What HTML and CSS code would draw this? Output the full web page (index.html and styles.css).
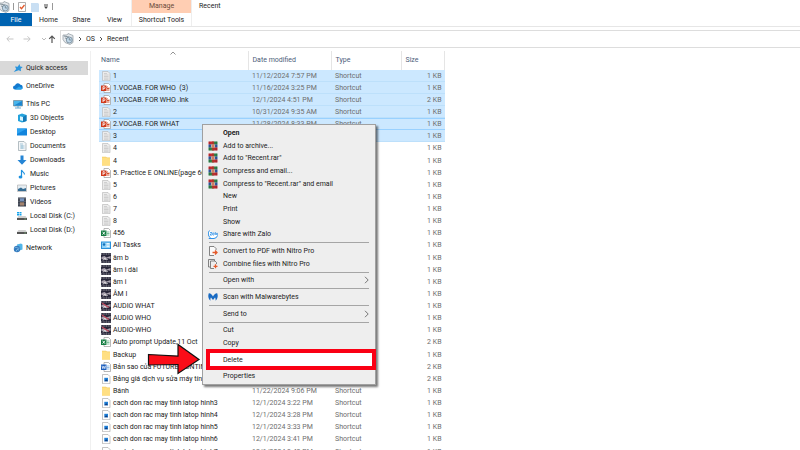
FILE: index.html
```html
<!DOCTYPE html>
<html lang="en">
<head>
<meta charset="utf-8">
<title>Recent</title>
<link rel="stylesheet" href="styles.css">
</head>
<body>
<svg class="defs" aria-hidden="true">
  <symbol id="doc" viewBox="0 0 10 10"><path d="M1.500.500h5.500l2 2v7.200h-7.500z" fill="#ececec" stroke="#b4b4b4" stroke-width=".6"/><path d="M3 2.500h3M3 4h4.500M3 5.500h4.500M3 7h4.500M3 8.300h4.500" stroke="#bcbcbc" stroke-width=".6"/></symbol>
  <symbol id="ppt" viewBox="0 0 10 10"><path d="M3 .5h4.500l2 2v7h-6.500z" fill="#fff" stroke="#999" stroke-width=".7"/><path d="M6 5.500h2.500M6 7h2.500M6.500 3.500a1 1 0 1 0 1.500 1" stroke="#d35230" fill="none"/><path d="M0 2.500h5.500v5.500H0z" fill="#d13b1d"/><path d="M2 7V3.700h1a.9.9 0 0 1 0 2H2" stroke="#fff" fill="none" stroke-width=".8"/></symbol>
  <symbol id="xls" viewBox="0 0 10 10"><path d="M3 .5h4.500l2 2v7h-6.500z" fill="#fff" stroke="#999" stroke-width=".7"/><path d="M6 4h2.500M6 5.500h2.500M6 7h2.500" stroke="#2c9a5d" stroke-width=".6"/><path d="M0 2.500h5.500v5.500H0z" fill="#137c41"/><path d="M1.500 3.700l2.500 3M4 3.700l-2.500 3" stroke="#fff" stroke-width=".9"/></symbol>
  <symbol id="word" viewBox="0 0 10 10"><path d="M3 .5h4.500l2 2v7h-6.500z" fill="#fff" stroke="#999" stroke-width=".7"/><path d="M6 4h2.500M6 5.500h2.500M6 7h2.500" stroke="#4a90d9" stroke-width=".6"/><path d="M0 2.500h5.500v5.500H0z" fill="#1b5ebe"/><path d="M1 3.700l.8 3 1-2.500 1 2.500.8-3" stroke="#fff" fill="none" stroke-width=".7"/></symbol>
  <symbol id="folder" viewBox="0 0 10 10"><path d="M1 .8h4l1 .8h3V9.500H1z" fill="#f3cc62"/><path d="M1 1.500h4.500l1 .8H9V9.500H1z" fill="#ffdf82"/></symbol>
  <symbol id="tasks" viewBox="0 0 10 10"><path d="M0 1.500h10v7.500H0z" fill="#2a91dc"/><path d="M1 2.500h8v5.500H1z" fill="#8fd0f7"/><path d="M5.500 3.500h3M5.500 5h3M5.500 6.500h3" stroke="#fff" stroke-width=".8"/><circle cx="3" cy="4.500" r="1.300" fill="#1572bc"/></symbol>
  <symbol id="media" viewBox="0 0 10 10"><path d="M0 0h10v10H0z" fill="#28273a"/><path d="M0 1h10M0 9h10" stroke="#ddd" stroke-width=".7" stroke-dasharray="1 .7"/><path d="M.5 4l3-1 2 1.500 4-1.500v3l-3-1-2 2-4-1z" fill="#a9a2ae"/><path d="M2 7.500l2-2.500 1 2 2-1" stroke="#eee" stroke-width=".7" fill="none"/></symbol>
  <symbol id="audio" viewBox="0 0 10 10"><use href="#media"/><path d="M1 2l3 2 4 2.500" stroke="#c0475b" stroke-width="1.200"/></symbol>
  <symbol id="image" viewBox="0 0 10 10"><path d="M1.500.500h5.500l2 2v7.200h-7.500z" fill="#fff" stroke="#aaa" stroke-width=".7"/><path d="M3.300 3.800h3.700v3.500H3.300z" fill="#1e7ed6"/><path d="M3.300 7.300l2-2 1.700 2z" fill="#123b7b"/></symbol>
  <symbol id="rar" viewBox="0 0 10 10"><path d="M.500.500h5v3h-5z" fill="#d8262f"/><path d="M5.500.5h4v3h-4z" fill="#2a8a4a"/><path d="M.5 3.500h9v3h-9z" fill="#2f5cb0"/><path d="M.5 6.500h5v3h-5z" fill="#2a8a4a"/><path d="M5.500 6.500h4v3h-4z" fill="#c9262f"/><path d="M3.800.5h2.400v9H3.800z" fill="#a8392c"/><path d="M3.200 3.500h3.600v3H3.200z" fill="#e8c9a0"/><path d="M4.300 4.300h1.400v1.400H4.300z" fill="#c0302a"/><path d="M1.800.5v9M8.200.5v9" stroke="#333" stroke-width=".4"/></symbol>
  <symbol id="globe" viewBox="0 0 12 12"><path d="M1 2h4l1-1.500 5 2v7l-3 2-5-2-2-3z" fill="#e4e8ec" stroke="#8d969e" stroke-width=".7"/><circle cx="7.300" cy="7" r="3" fill="#bfd6e7" stroke="#718797" stroke-width=".8"/><path d="M2 3l5 1M3 5l2 .5M7.300 5v2h2" stroke="#6d7d88" stroke-width=".8" fill="none"/></symbol>
  <symbol id="drive" viewBox="0 0 10 10"><path d="M1.500 5h7L10 7H0z" fill="#d0d0d0"/><path d="M0 7h10v2H0z" fill="#555"/><path d="M7.500 8h1.300" stroke="#8fe08f" stroke-width=".7"/></symbol>
</svg>

<header class="ribbon">
  <div class="quick">
    <svg class="ic12"><use href="#globe"/></svg>
    <span class="bar"></span>
    <svg viewBox="0 0 10 10"><path d="M1.500.500h7v9h-7z" fill="#fff" stroke="#999" stroke-width=".8"/><path d="M3 5l1.500 1.700L7.500 3" fill="none" stroke="#e2592b" stroke-width="1.300"/></svg>
    <svg viewBox="0 0 10 10"><path d="M1 1h7l1 1v8H1z" fill="#c9dff3"/></svg>
    <svg class="ic6" viewBox="0 0 6 6"><path d="M1 1h4" stroke="#444"/><path d="M1 2.500h4L3 5z" fill="#444"/></svg>
    <span class="bar"></span>
  </div>
  <nav class="tabs">
    <a class="file" href="#file">File</a>
    <a href="#home">Home</a>
    <a href="#share">Share</a>
    <a href="#view">View</a>
  </nav>
  <div class="tools">
    <span class="manage">Manage</span>
    <a href="#tools">Shortcut Tools</a>
  </div>
  <h1>Recent</h1>
</header>

<div class="address">
  <button class="nav" aria-label="Back"><svg viewBox="0 0 8 8"><path d="M7.500 4H1M3.500 1.300L.8 4l2.700 2.700" stroke="#c5c5c5"/></svg></button>
  <button class="nav" aria-label="Forward"><svg viewBox="0 0 8 8"><path d="M.5 4H7M4.500 1.300L7.200 4 4.500 6.700" stroke="#c5c5c5"/></svg></button>
  <button class="nav small" aria-label="History"><svg viewBox="0 0 8 8"><path d="M2 3l2 2 2-2" stroke="#bbb"/></svg></button>
  <button class="nav up" aria-label="Up"><svg viewBox="0 0 8 8"><path d="M4 8V1M1.200 3.800L4 1l2.800 2.800" stroke="#555" stroke-width="1.200"/></svg></button>
  <div class="path">
    <svg class="ic12"><use href="#globe"/></svg>
    <svg class="sep" viewBox="0 0 4 6"><path d="M1 1l2 2-2 2"/></svg>
    <a href="#os">OS</a>
    <svg class="sep" viewBox="0 0 4 6"><path d="M1 1l2 2-2 2"/></svg>
    <a href="#recent">Recent</a>
  </div>
</div>

<div class="body">
  <nav class="side">
    <a class="top active" href="#q"><svg viewBox="0 0 10 10"><path d="M6.500 1l.7 2.500 2.500.5-2 1.700.3 2.600-2.300-1L.7 9l2.500-3L2 3.500l2.700.3z" fill="#2b95dd"/></svg>Quick access</a>
    <a class="top" href="#o"><svg viewBox="0 0 10 10"><path d="M2 8.500a2 2 0 0 1 0-4 3 3 0 0 1 5.500-.7A2.400 2.400 0 0 1 8 8.500z" fill="#1279cf"/><path d="M2 8.500l4-3 3.600 1.600A2 2 0 0 1 8 8.500z" fill="#27a3ea"/></svg>OneDrive</a>
    <a class="top" href="#pc"><svg viewBox="0 0 10 10"><path d="M.500 1.500h9v5.500h-9z" fill="#48b5ec" stroke="#657885" stroke-width=".6"/><path d="M1 6.500l8-4.500v4.500z" fill="#1d86d0"/><path d="M2 9h6M5 7v2" stroke="#69a8cf"/></svg>This PC</a>
    <a href="#3d"><svg viewBox="0 0 10 10"><path d="M1 2l4-1.500L9.500 2v6L5 9.500 1 8z" fill="#24a3dd"/><path d="M3 3.200l3 .8v4l-3-.8z" fill="#d9f5ff"/><path d="M6 4l3.500-2v6L6 9.200z" fill="#1479b7"/></svg>3D Objects</a>
    <a href="#desk"><svg viewBox="0 0 10 10"><path d="M0 1.500h10v7H0z" fill="#1285dd"/><path d="M0 1.500h10L0 7z" fill="#2da2f0"/></svg>Desktop</a>
    <a href="#docs"><svg viewBox="0 0 10 10"><path d="M1.500.500h5.500l2 2v7h-7.500z" fill="#f4f6f7" stroke="#97a3aa" stroke-width=".7"/><path d="M3 3h3M3 5h4.500M3 7h4.500M5 4v4" stroke="#85b6cf" stroke-width=".7"/></svg>Documents</a>
    <a href="#down"><svg viewBox="0 0 10 10"><path d="M3.500.500h3v4.500h3L5 9.800.5 5h3z" fill="#2585d5"/></svg>Downloads</a>
    <a href="#music"><svg viewBox="0 0 10 10"><path d="M4.500 8V1c.5 2 3 2 3 4.500" stroke="#1d91df" stroke-width="1.200" fill="none"/><ellipse cx="3.500" cy="8" rx="1.900" ry="1.500" fill="#1d91df"/></svg>Music</a>
    <a href="#pics"><svg viewBox="0 0 10 10"><path d="M.500 2h9v6.500h-9z" fill="#e5edf2" stroke="#aaa" stroke-width=".6"/><path d="M1 6l3-1.500L6 6l3-1v3H1z" fill="#376d93"/></svg>Pictures</a>
    <a href="#vids"><svg viewBox="0 0 10 10"><path d="M1 .5h8v9H1z" fill="#333a48"/><path d="M3 1.200h4v3.300H3z" fill="#7894bd"/><path d="M3 5.300h4v3.300H3z" fill="#a3836e"/><path d="M2 1v8M8 1v8" stroke="#ddd" stroke-width=".6" stroke-dasharray=".8"/></svg>Videos</a>
    <a href="#c"><svg viewBox="0 0 10 10"><use href="#drive"/><path d="M0 1h2v1.500H0zM2.500 1h2v1.500h-2zM0 3h2v1.500H0zM2.500 3h2v1.500h-2z" fill="#17a4ec"/></svg>Local Disk (C:)</a>
    <a href="#d"><svg><use href="#drive"/></svg>Local Disk (D:)</a>
    <a class="top" href="#net"><svg viewBox="0 0 10 10"><path d="M4 1.500l4-1 1.500 1v5L5 8z" fill="#51b5e8"/><circle cx="4" cy="6" r="3.200" fill="#3479bd"/><path d="M1.500 5c2-2 3 1 5 0M3 8.500l1-2 2 .5" stroke="#92cbed" fill="none" stroke-width=".8"/></svg>Network</a>
  </nav>

  <main>
    <table>
      <thead>
        <tr><th class="name">Name<svg class="sort" viewBox="0 0 8 4"><path d="M1.500 3.500L4 1l2.500 2.500" fill="none" stroke="#777" stroke-width=".8"/></svg></th><th class="date">Date modified</th><th class="type">Type</th><th class="size">Size</th></tr>
      </thead>
      <tbody id="files"></tbody>
    </table>
  </main>
</div>

<div class="menu">
  <ul>
    <li><button class="bold"><i></i>Open</button></li>
    <li><button><svg><use href="#rar"/></svg>Add to archive...</button></li>
    <li><button><svg><use href="#rar"/></svg>Add to "Recent.rar"</button></li>
    <li><button><svg><use href="#rar"/></svg>Compress and email...</button></li>
    <li><button><svg><use href="#rar"/></svg>Compress to "Recent.rar" and email</button></li>
    <li><button><i></i>New</button></li>
    <li><button><i></i>Print</button></li>
    <li><button><i></i>Show</button></li>
    <li><button><svg viewBox="0 0 10 10"><path d="M1.500 1.500A5 5 0 0 0 2 8.500L1 9.500h5a4 4 0 0 0 3.500-3" fill="#fff" stroke="#1684e5" stroke-width=".9"/><path d="M2 3.500h2L2 6h2M6 4.300a1 1 0 1 0 0 1.500V4M7.300 3v3M9 4.200a.8.8 0 1 0 .1 0" stroke="#1684e5" stroke-width=".7" fill="none"/></svg>Share with Zalo</button></li>
    <li class="group"><button><svg viewBox="0 0 10 10"><path d="M6 9.500H1.500v-9H6L8 2.500V4" fill="#fafafa" stroke="#666" stroke-width=".8"/><path d="M4.500 6.500h4M7 4.500l2 2-2 2" fill="none" stroke="#e45a2b" stroke-width="1.300"/></svg>Convert to PDF with Nitro Pro</button></li>
    <li><button><svg viewBox="0 0 10 10"><path d="M2 8H.5V.500h6V2M6 9.500H2.500V2H7l1.500 1.500V5" fill="none" stroke="#666" stroke-width=".8"/><path d="M7.500 5.300v4M5.500 7.300h4" stroke="#e45a2b" stroke-width="1.300"/></svg>Combine files with Nitro Pro</button></li>
    <li class="group"><button><i></i>Open with<svg class="more" viewBox="0 0 5 8"><path d="M1 .8L4.200 4 1 7.200"/></svg></button></li>
    <li class="group"><button><svg viewBox="0 0 10 10"><path d="M.8 1.200C2.500 1 4 2.500 5 4.500 6 2.500 7.500 1 9.200 1.200 10.200 4 9.800 7 7.500 8.800 7.800 7.500 7.500 6 7 5.500L5 8 3 5.500c-.5.500-.8 2-.5 3.300C.2 7-.2 4 .8 1.200z" fill="#1769c2"/></svg>Scan with Malwarebytes</button></li>
    <li class="group"><button><i></i>Send to<svg class="more" viewBox="0 0 5 8"><path d="M1 .8L4.200 4 1 7.200"/></svg></button></li>
    <li class="group"><button><i></i>Cut</button></li>
    <li><button><i></i>Copy</button></li>
    <li class="group marked"><button><i></i>Delete</button></li>
    <li class="group"><button><i></i>Properties</button></li>
  </ul>
</div>
<svg class="arrow" viewBox="0 0 54 32" aria-hidden="true"><path d="M1.500 11.500L31 13V1.500L52 16.500 31 30.500V21.500L1.500 22z" fill="#fb0d18" stroke="#111" stroke-width="1.200"/></svg>
<script src="files.js"></script>
</body>
</html>
```
FILE: styles.css
```css
*, ::before, ::after { box-sizing: border-box; }
body { margin: 0; height: 100vh; overflow: hidden; background: #fff; color: #1c1c1c; font: 7px/12px Roboto, "Open Sans", sans-serif; }
a { color: inherit; text-decoration: none; }
button { font: inherit; color: inherit; border: 0; padding: 0; background: none; }
.defs { position: absolute; width: 0; height: 0; }
svg { display: block; flex: none; width: 10px; height: 10px; }
svg.ic12 { width: 12px; height: 12px; }
svg.ic6 { width: 6px; height: 6px; }

.ribbon { display: grid; grid-template-columns: 131px 61px 1fr; grid-template-rows: 13px 13px; border-bottom: 1px solid #e6e6e6; }
.quick { display: flex; align-items: center; gap: 3px; margin-left: -2px; }
.bar { width: 1px; height: 7px; background: #999; }
.tabs { grid-row: 2; display: flex; line-height: 14px; }
.tabs a { width: 33px; text-align: center; }
.tabs .file { width: 32px; background: #0063b1; color: #fff; }
.tools { grid-column: 2; grid-row: 1 / 3; border: 1px solid #eee; border-width: 0 1px; text-align: center; }
.tools .manage { display: block; height: 13px; background: #ffceb3; color: #6b4a3a; }
.tools a { display: block; line-height: 14px; }
h1 { margin: 0; padding-left: 7px; font-size: 7px; line-height: 13px; font-weight: 400; }

.address { display: flex; align-items: center; height: 24px; padding-left: 6px; }
.nav { width: 17px; }
.nav.small { width: 8px; }
.nav svg { width: 8px; height: 8px; fill: none; }
.nav.up { width: 12px; }
.path { flex: 1; display: flex; align-items: center; gap: 4px; height: 18px; padding-left: 1px; border: 1px solid #ddd; border-right: 0; }
.path .sep { width: 4px; height: 6px; fill: none; stroke: #555; }

.body { display: flex; }
.side { width: 91px; padding-top: 10px; border-right: 1px solid #f0f0f0; }
.side a { display: flex; align-items: center; gap: 3px; height: 14px; padding-left: 17px; white-space: nowrap; }
.side .top { padding-left: 13px; margin-bottom: 4px; }
.side .top:nth-child(3) { margin-bottom: 0; }
.side .top:last-child { margin-top: 4px; }
.side .active { background: #d9d9d9; margin-right: 2px; }

main { flex: 1; padding: 0 0 0 8px; overflow: hidden; }
table { width: 346px; table-layout: fixed; border-collapse: collapse; }
th { position: relative; height: 19px; padding: 0 0 1px 4px; border-right: 1px solid #e5e5e5; text-align: left; font-weight: 400; color: #4c607a; }
th.name { width: 149px; padding-left: 2px; }
th.date { width: 83px; }
th.type { width: 70px; }
.sort { position: absolute; left: 70px; top: 0; width: 8px; height: 4px; }
td { height: 12px; padding: 0 0 0 4px; line-height: 12px; white-space: pre; color: #6d6d6d; }
tr:nth-child(8n) td { height: 13px; }
td:first-child { padding-left: 2px; color: #1c1c1c; }
td:last-child { text-align: right; padding-right: 3px; }
td span { display: flex; align-items: center; gap: 2px; }
.sel td { background: #cce8ff; box-shadow: inset 0 -1px #bde0fb; }
.sel.focus td { box-shadow: inset 0 -1px #99d1ff, inset 0 1px #99d1ff; }

.menu { position: absolute; left: 202px; top: 124px; width: 174px; padding: 1px 0 2px; border: 1px solid #a0a0a0; background: #eee; box-shadow: 2px 2px 2px #0008; }
.menu ul { list-style: none; margin: 0; padding: 0; }
.menu li { position: relative; }
.menu button { position: relative; display: flex; align-items: center; gap: 5px; width: 100%; height: 13px; padding: 0 6px 0 5px; text-align: left; white-space: nowrap; }
.menu li:nth-child(3n) button { height: 12px; }
.menu i { width: 10px; }
.menu .bold { font-weight: 700; }
.menu .group { padding-top: 2px; }
.menu .group::before { content: ""; display: block; margin: 0 6px 1px; border-top: 1px solid #a5a5a5; }
.menu .more { width: 5px; height: 8px; margin-left: auto; fill: none; stroke: #555; stroke-width: .8; }
.menu .marked { z-index: 1; }
.menu .marked::after { content: ""; position: absolute; inset: 0 -1px -4px 3px; border: 4px solid #fa0014; background: #fff; }
.menu .marked button { z-index: 1; }
.arrow { position: absolute; left: 147px; top: 343px; width: 54px; height: 32px; }
```
FILE: files.js
```js
const files = [
  ["doc", "1", "11/12/2024 7:57 PM", 1, "sel"],
  ["ppt", "1.VOCAB. FOR WHO  (3)", "11/16/2024 3:25 PM", 1, "sel"],
  ["ppt", "1.VOCAB. FOR WHO .lnk", "12/1/2024 4:51 PM", 2, "sel"],
  ["doc", "2", "10/31/2024 9:35 AM", 1, "sel"],
  ["ppt", "2.VOCAB. FOR WHAT", "11/28/2024 8:33 PM", 1, "sel focus"],
  ["doc", "3", "", 1, "sel"],
  ["doc", "4", "", 1],
  ["folder", "4", "", 1],
  ["ppt", "5. Practice E ONLINE(page 66)", "", 1],
  ["doc", "5", "", 1],
  ["doc", "6", "", 1],
  ["doc", "7", "", 1],
  ["doc", "8", "", 1],
  ["xls", "456", "", 1],
  ["tasks", "All Tasks", "", 1],
  ["media", "âm b", "", 1],
  ["media", "âm i dài", "", 1],
  ["media", "âm i", "", 1],
  ["media", "ÂM I", "", 1],
  ["audio", "AUDIO WHAT", "", 1],
  ["audio", "AUDIO WHO", "", 1],
  ["audio", "AUDIO-WHO", "", 1],
  ["xls", "Auto prompt Update,11 Oct", "", 2],
  ["folder", "Backup", "", 1],
  ["word", "Bản sao của FUTURE CONTIN", "", 2],
  ["image", "Bảng giá dịch vụ sửa máy tính", "", 2],
  ["folder", "Bánh", "11/22/2024 9:06 PM", 1],
  ["image", "cach don rac may tinh latop hinh3", "12/1/2024 3:22 PM", 1],
  ["image", "cach don rac may tinh latop hinh4", "12/1/2024 3:28 PM", 1],
  ["image", "cach don rac may tinh latop hinh5", "12/1/2024 3:33 PM", 1],
  ["image", "cach don rac may tinh latop hinh6", "12/1/2024 3:41 PM", 1],
  ["image", "cach don rac may tinh latop hinh7", "12/1/2024 3:42 PM", 1]
];
document.getElementById("files").innerHTML = files.map(([icon, name, date, size, state = ""]) =>
  `<tr class="${state}"><td><span><svg><use href="#${icon}"/></svg>${name}</span></td><td>${date}</td><td>${date ? "Shortcut" : ""}</td><td>${size} KB</td></tr>`
).join("");
```
